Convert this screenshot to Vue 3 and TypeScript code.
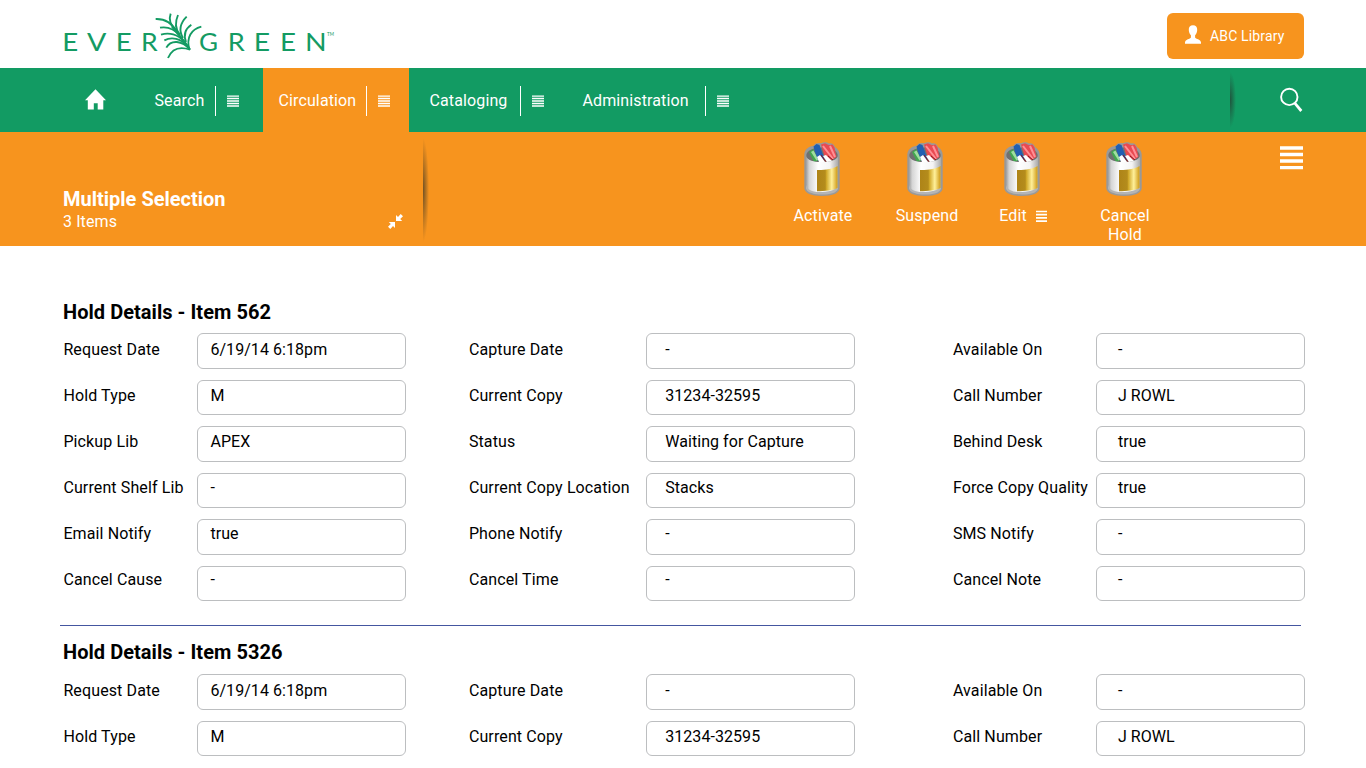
<script setup lang="ts">
interface Field {
  label: string
  value: string
}
interface Hold {
  item: string
  columns: Field[][]
}

const logoLetters: { ch: string; x: number; w: number }[] = [
  { ch: 'E', x: 37, w: 48 },
  { ch: 'V', x: 111, w: 58 },
  { ch: 'E', x: 197, w: 48 },
  { ch: 'R', x: 273, w: 50 },
  { ch: 'G', x: 447, w: 57 },
  { ch: 'R', x: 533, w: 51 },
  { ch: 'E', x: 611, w: 49 },
  { ch: 'E', x: 690, w: 48 },
  { ch: 'N', x: 765, w: 65 },
]

const leaves: string[] = [
  'M317 57C342 56 365 68 380 94',
  'M362 41C354 62 362 78 380 94',
  'M384 45C374 68 375 86 389 103',
  'M410 50C390 70 386 92 399 114',
  'M424 74C403 88 400 104 408 126',
  'M454 80C424 88 408 112 418 149',
  'M330 83C352 79 372 86 391 107',
  'M333 104C357 96 384 103 402 124',
  'M343 121C366 109 392 116 411 137',
  'M349 143C362 119 396 120 420 149',
  'M354 174C366 146 390 139 420 149',
  'M366 80C382 104 403 118 420 149',
]

const nav = [
  { name: 'search', label: 'Search' },
  { name: 'circulation', label: 'Circulation' },
  { name: 'cataloging', label: 'Cataloging' },
  { name: 'administration', label: 'Administration' },
]

const actions = [
  { name: 'activate', label: 'Activate', menu: false },
  { name: 'suspend', label: 'Suspend', menu: false },
  { name: 'edit', label: 'Edit', menu: true },
  { name: 'cancel', label: 'Cancel Hold', menu: false },
]

const columns: Field[][] = [
  [
    { label: 'Request Date', value: '6/19/14 6:18pm' },
    { label: 'Hold Type', value: 'M' },
    { label: 'Pickup Lib', value: 'APEX' },
    { label: 'Current Shelf Lib', value: '-' },
    { label: 'Email Notify', value: 'true' },
    { label: 'Cancel Cause', value: '-' },
  ],
  [
    { label: 'Capture Date', value: '-' },
    { label: 'Current Copy', value: '31234-32595' },
    { label: 'Status', value: 'Waiting for Capture' },
    { label: 'Current Copy Location', value: 'Stacks' },
    { label: 'Phone Notify', value: '-' },
    { label: 'Cancel Time', value: '-' },
  ],
  [
    { label: 'Available On', value: '-' },
    { label: 'Call Number', value: 'J ROWL' },
    { label: 'Behind Desk', value: 'true' },
    { label: 'Force Copy Quality', value: 'true' },
    { label: 'SMS Notify', value: '-' },
    { label: 'Cancel Note', value: '-' },
  ],
]

const holds: Hold[] = [
  { item: '562', columns },
  { item: '5326', columns: columns.map((col) => col.slice(0, 2)) },
]
</script>

<template>
  <div class="page">
    <header class="top">
      <svg class="logo" viewBox="0 0 900 204" aria-label="Evergreen">
        <text
          v-for="(l, i) in logoLetters"
          :key="i"
          :x="l.x"
          y="152"
          :textLength="l.w"
          lengthAdjust="spacingAndGlyphs"
          class="letter"
        >{{ l.ch }}</text>
        <text x="831" y="107" class="tm" textLength="21" lengthAdjust="spacingAndGlyphs">TM</text>
        <path v-for="d in leaves" :key="d" :d="d" class="leaf" />
      </svg>
      <button class="library">
        <svg width="16" height="19" viewBox="0 0 16 19">
          <path fill="#fff" d="M8 0.3c2.8 0 4.4 1.8 4.2 4.7-.1 2.3-.9 4-2.1 5.200v2.200c.5 1.500 5.800 1.700 5.900 5.100v1.200H0v-1.200c.1-3.400 5.400-3.600 5.900-5.100v-2.200C4.700 9 3.900 7.300 3.800 5 3.600 2.100 5.200.3 8 .3z" />
        </svg>
        <span>ABC Library</span>
      </button>
    </header>

    <nav class="nav">
      <svg class="home" width="21" height="21" viewBox="0 0 21 21">
        <path fill="#fff" d="M10.500.3 21 11.200h-2.700v9.300h-5.600v-6.200H8.800v6.200H2.800v-9.300H0z" />
      </svg>
      <div v-for="n in nav" :key="n.name" class="tab" :class="n.name">
        <span class="tab-label">{{ n.label }}</span>
        <i class="rule"></i>
        <svg class="lines" width="12" height="12" viewBox="0 0 12 12">
          <path d="M0 1.100h12M0 3.500h12M0 6h12M0 8.500h12M0 11h12" stroke="#fff" stroke-width="1.300" />
        </svg>
      </div>
      <i class="shade nav-shade"></i>
      <svg class="search-icon" width="24" height="25" viewBox="0 0 24 25">
        <circle cx="9.300" cy="9.900" r="8.200" fill="none" stroke="#fff" stroke-width="1.900" />
        <path d="M14.800 16.200 21.300 24" stroke="#fff" stroke-width="2.800" />
      </svg>
    </nav>

    <section class="bar">
      <div class="selection">
        <div>
          <h1>Multiple Selection</h1>
          <p>3 Items</p>
        </div>
        <svg class="collapse" width="15" height="15" viewBox="0 0 15 15">
          <path fill="#fff" d="M8 7V1l2 2 2.700-3L15 2.300 12.200 5l2 2zM7 8v6l-2-2-2.700 3L0 12.700 2.800 10l-2-2z" />
        </svg>
      </div>
      <i class="shade bar-shade"></i>
      <div class="actions">
        <div v-for="a in actions" :key="a.name" class="action" :class="a.name">
          <svg class="cup" width="36" height="54" viewBox="0 0 36 54">
            <defs>
              <linearGradient :id="a.name + '-body'">
                <stop offset="0" stop-color="#9c9c9c" />
                <stop offset=".1" stop-color="#d5d5d5" />
                <stop offset=".38" stop-color="#fff" />
                <stop offset=".75" stop-color="#f4f4f4" />
                <stop offset="1" stop-color="#aaa" />
              </linearGradient>
              <linearGradient :id="a.name + '-gold'">
                <stop offset="0" stop-color="#ae8418" />
                <stop offset=".4" stop-color="#b48c1c" />
                <stop offset=".46" stop-color="#d0a829" />
                <stop offset=".72" stop-color="#fff09a" />
                <stop offset="1" stop-color="#cf9a15" />
              </linearGradient>
            </defs>
            <path d="M.3 13C.3 7 5 4.500 10 3.500 11 1 14 .5 17 1.300 20-.3 23 .2 25 1.500c3-.8 5 1 6 3.500 3 2 4.700 4.500 4.700 8v33c0 5-7 8-17.700 8S.3 51 .3 46z" fill="#999" />
            <path d="M2.300 13C3 8 10 5.500 18 5.500s15 2.500 15.700 7.500c0 5-6 8-15.700 8S2.300 18 2.300 13z" fill="#707070" />
            <path d="M5 10l4-3 6 11-5 2z" fill="#43a650" />
            <path d="M7 10l2.500-1.500 5 9-2 1z" fill="#a0dfa0" />
            <path d="M9.500 4.500l3-2.500 3 1 1 3 4 11-6 2-3.500-9z" fill="#225fb2" />
            <path d="M17 2.500l4-1.300 4 2 3.500-.7 2 3 2 9.500-5 3-7-4z" fill="#e94a51" />
            <path d="M19 4l7 9 3 4M26 4l5 11" stroke="#ff8f95" stroke-width="2" fill="none" />
            <path d="M13 15l3-2 5 7h-6zM19 14l3-1 6 6-5 1z" fill="#fff" />
            <path d="M17 13l5 7M24 14l5 4" stroke="#8b1820" stroke-width="1" />
            <path d="M2 15c2 3 8 5 14 5 9 0 15-1 18-5v30c0 4-6 6.500-16 6.500S2 49 2 45z" :fill="`url(#${a.name}-body)`" />
            <path d="M2 43c1 4.500 6 7 13 7 9 0 17-1.500 19-6v2.500c-1 4.500-8 6-16 6S3 50.500 2 46.500z" fill="#b4b4b4" />
            <path d="M13 28c8 .2 16-1 20.500-4v22c-4 2.500-13 3.200-20.500 3.200z" :fill="`url(#${a.name}-gold)`" />
          </svg>
          <div class="action-label">
            <span>{{ a.label }}</span>
            <svg v-if="a.menu" width="11" height="12" viewBox="0 0 11 12">
              <path d="M0 1.500h11M0 4.700h11M0 7.900h11M0 11.100h11" stroke="#fff" stroke-width="1.700" />
            </svg>
          </div>
        </div>
      </div>
      <svg class="burger" width="23" height="24" viewBox="0 0 23 24">
        <path d="M0 2h23M0 8.500h23M0 15h23M0 21.700h23" stroke="#fff" stroke-width="3.300" />
      </svg>
    </section>

    <main>
      <section v-for="h in holds" :key="h.item" class="hold">
        <h2>Hold Details - Item {{ h.item }}</h2>
        <div class="fields">
          <div v-for="(col, c) in h.columns" :key="c" class="column" :class="'column-' + (c + 1)">
            <div class="labels">
              <span v-for="f in col" :key="f.label">{{ f.label }}</span>
            </div>
            <div class="boxes">
              <i v-for="f in col" :key="f.label"></i>
            </div>
            <div class="values">
              <span v-for="f in col" :key="f.label">{{ f.value }}</span>
            </div>
          </div>
        </div>
      </section>
    </main>
  </div>
</template>

<style>
body {
  margin: 0;
  overflow: hidden;
}
</style>

<style scoped>
.page {
  width: 1366px;
  height: 768px;
  overflow: hidden;
  background: #fff;
  color: #000;
  font: 16px/19px Roboto, 'Liberation Sans', sans-serif;
}
svg {
  display: block;
  flex: none;
}
h1, h2, p {
  margin: 0;
}
.top {
  height: 68px;
  display: flex;
  justify-content: space-between;
  box-sizing: border-box;
  padding: 0 62px 0 50px;
}
.logo {
  width: 300px;
  height: 68px;
}
.letter {
  font: 400 77px Lato, sans-serif;
  fill: #149b63;
}
.tm {
  font: 400 14px Lato, sans-serif;
  fill: #149b63;
}
.leaf {
  fill: none;
  stroke: #149b63;
  stroke-width: 5.6;
}
.library {
  width: 137px;
  height: 46px;
  margin-top: 13px;
  padding: 0 0 0 18px;
  border: 0;
  border-radius: 6px;
  background: #f7941e;
  color: #fff;
  font: 14px/18px Roboto, sans-serif;
  letter-spacing: .15px;
  display: flex;
  align-items: center;
  gap: 9px;
  white-space: nowrap;
}
.library svg {
  margin-top: -3px;
}
.nav {
  height: 64px;
  background: #129b63;
  color: #fff;
  display: flex;
}
.home {
  margin: 21px 33.5px 0 84.5px;
}
.tab {
  height: 64px;
  display: flex;
  box-sizing: border-box;
  padding-left: 15.5px;
  letter-spacing: .12px;
}
.search { width: 124px; }
.circulation { width: 146px; background: #f7941e; }
.cataloging { width: 158px; padding-left: 20.5px; }
.administration { width: 170px; }
.search .tab-label { width: 60.5px; }
.circulation .tab-label { width: 87.5px; }
.cataloging .tab-label { width: 90.5px; }
.administration .tab-label { width: 122.5px; }
.tab-label {
  padding-top: 23px;
}
.rule {
  width: 1px;
  height: 30px;
  margin-top: 18px;
  background: #fff;
}
.lines {
  margin: 27px 0 0 11px;
}
.shade {
  width: 6px;
  background: radial-gradient(ellipse 6px 50% at 0 50%, rgba(40, 45, 40, .65), rgba(40, 45, 40, .32) 50%, transparent);
}
.nav-shade {
  height: 56px;
  margin: 4px 0 0 493px;
}
.search-icon {
  margin: 19px 0 0 44px;
}
.bar {
  height: 114px;
  background: #f7941e;
  color: #fff;
  display: flex;
}
.selection {
  width: 360px;
  padding: 56px 0 0 63px;
  display: flex;
  justify-content: space-between;
}
h1 {
  font-size: 20px;
  line-height: 23px;
  font-weight: 700;
}
.selection p {
  padding-top: 1px;
  letter-spacing: .1px;
}
.collapse {
  margin: 25.5px 20.5px 0 0;
}
.bar-shade {
  height: 104px;
  margin-top: 6px;
}
.actions {
  margin: 10px 0 0 345px;
  width: 506px;
  display: flex;
}
.action {
  display: flex;
  flex-direction: column;
  align-items: center;
  text-align: center;
}
.action-label {
  margin-top: 10px;
  display: flex;
  justify-content: center;
  align-items: center;
  gap: 9px;
  letter-spacing: .12px;
}
.activate { width: 98px; }
.suspend { width: 110px; }
.edit { width: 82px; }
.cancel { width: 122px; }
.activate .cup { margin-right: 3px; }
.suspend .cup { margin-right: 5px; }
.edit .cup { margin-right: 3px; }
.cancel .cup { margin-right: 2px; }
.cancel span { width: 60px; }
.burger {
  margin-top: 14px;
}
main {
  padding: 54px 0 0 60px;
}
.hold {
  width: 1241px;
  height: 325px;
}
.hold:first-child {
  border-bottom: 1px solid #4456a0;
}
.hold:last-child {
  height: 135px;
  padding-top: 14px;
}
.hold:last-child .fields {
  padding-top: 10px;
}
h2 {
  padding-left: 3px;
  font-size: 20px;
  line-height: 24px;
  font-weight: 700;
  letter-spacing: .04px;
}
.fields {
  display: grid;
  grid-template-columns: 405.5px 484px 352px;
  padding: 9px 0 0 3.4px;
}
.column {
  display: grid;
  white-space: nowrap;
}
.column-1 { grid-template-columns: 134px 209px; }
.column-2 { grid-template-columns: 177.5px 209px; }
.column-3 { grid-template-columns: 143px 209px; }
.labels, .values {
  display: flex;
  flex-direction: column;
  gap: 27px;
  padding-top: 7px;
  letter-spacing: .12px;
}
.boxes, .values {
  grid-column: 2;
  grid-row: 1;
}
.values {
  padding-left: 18.8px;
  letter-spacing: .06px;
}
.column-1 .values { padding-left: 13px; }
.column-3 .values { padding-left: 22px; }
.boxes {
  display: flex;
  flex-direction: column;
  gap: 11px;
}
.boxes i {
  height: 35.500px;
  box-sizing: border-box;
  border: 1px solid #bcbec0;
  border-radius: 6px;
}
</style>
